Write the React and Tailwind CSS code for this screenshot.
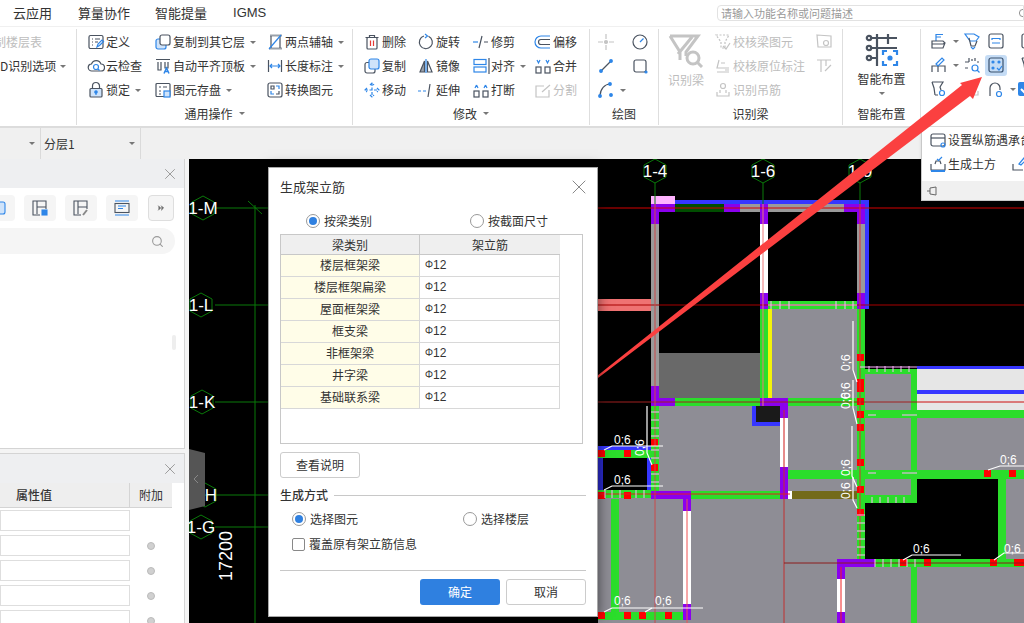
import React from 'react';
import { X, Search, ChevronsRight } from 'lucide-react';

const DK = '#4a5360';
const BL = '#2e86e8';
const GY = '#c4c4c4';

// all ribbon icons share one 18x18 box
const ICONS = {
  define: <><rect x="2" y="2.5" width="14" height="13" rx="1.5" /><path d="M5 6h1M8 6h5M5 9h1M8 9h3M5 12h1" /><path d="M10 14l1-3 4-4 1.5 1.5-4 4z" stroke={BL} /></>,
  cloud: <><path d="M5 14a3.5 3.5 0 0 1-.5-7A5 5 0 0 1 14 7a3.5 3.5 0 0 1 0 7z" /><circle cx="9" cy="10" r="2.5" stroke={BL} /><path d="M11 12l1.5 1.5" stroke={BL} /></>,
  lock: <><rect x="3" y="7.5" width="12" height="8.5" rx="1" fill="#cfe3fa" /><path d="M5.5 7.5V5a3.5 3.5 0 0 1 7 0v2.5" /><circle cx="9" cy="11" r="1.2" fill={BL} stroke={BL} /><path d="M9 12v2" stroke={BL} /></>,
  copyFloor: <><rect x="2" y="6" width="10" height="10" rx="2" fill="#cfe3fa" stroke={BL} /><rect x="6" y="2" width="10" height="10" rx="2" fill="#fff" /></>,
  align: <><path d="M2 2.5h14M4 5v8h3V5M11 5v6h3V5" /><path d="M10 16.500l2.500-5.500 2.500 5.500M11 14.500h3" stroke={BL} strokeWidth="1.500" /></>,
  save: <><rect x="2" y="2.5" width="14" height="13" rx="1" /><path d="M5 6h2M9 6h4M5 10h2M5 13h2" /><rect x="10" y="10" width="6" height="6" fill="#cfe3fa" stroke={BL} /></>,
  twoAxis: <><path d="M3 15.5h13M4 2.5h12" stroke="#9aa1aa" strokeWidth="2" /><path d="M5 3v12M14 3v12" stroke={DK} /><path d="M3 16L15 2" stroke={BL} /></>,
  dim: <><path d="M2.5 3v12M15.5 3v12" /><path d="M4 9h10M6 7l-2 2 2 2M12 7l2 2-2 2" stroke={BL} /></>,
  convert: <><rect x="2" y="2" width="14" height="14" rx="2" /><path d="M5 5h3v3H5zM10 13h3v-3" /><path d="M10 5h3v3M5 10v3h3" stroke={BL} /></>,
  del: <><path d="M2.5 4.5h13M6.5 4V2.5h5V4" /><rect x="4" y="4.5" width="10" height="11.5" rx="1" /><path d="M7.5 7.500v5.500M10.500 7.500v5.500" stroke="#e53935" /></>,
  copy: <><rect x="2" y="5.500" width="10" height="10.500" rx="2" fill="#fff" /><rect x="6" y="2" width="10" height="10" rx="2" fill="#cfe3fa" stroke={BL} /></>,
  move: <path d="M9 2v14M2 9h14M7 4l2-2 2 2M7 14l2 2 2-2M4 7L2 9l2 2M14 7l2 2-2 2" stroke={BL} strokeDasharray="3 1.500" />,
  rotate: <><path d="M11.500 3.300A6.500 6.500 0 1 1 7 3" /><path d="M8 1l2.500 2L8 5" stroke={BL} /></>,
  mirror: <><path d="M7.500 4L3 15h4.500z" fill="#9aa1aa" /><path d="M10.500 4L15 15h-4.500z" /><path d="M9 2v14" stroke={BL} /></>,
  extend: <><path d="M1 10h3M6 10h3" stroke={BL} /><path d="M13 3l-2 13" /></>,
  trim: <><path d="M1 9h5" stroke={BL} /><path d="M10 3L7 15M12 9h4" /></>,
  alignObj: <><rect x="2" y="2.500" width="12" height="5" stroke={BL} /><rect x="2" y="10" width="12" height="5" stroke={BL} /><path d="M17 1v16" /></>,
  breakObj: <><rect x="2" y="10" width="5" height="6" /><rect x="11" y="10" width="5" height="6" /><path d="M3 7l1.500-3M6 7L4.500 4M12 7l1.500-3M15 7l-1.500-3" stroke={BL} /></>,
  offset: <><path d="M16 3H7a6 6 0 0 0 0 12h9" stroke={BL} /><path d="M16 6.500H7a2.500 2.500 0 0 0 0 5h9" /></>,
  merge: <><rect x="2" y="10" width="5" height="6" /><rect x="11" y="10" width="5" height="6" /><path d="M3 3l1.500 3L6 3M12 3l1.500 3L15 3" stroke={BL} /></>,
  split: <><path d="M15 9v7H2V5h8" stroke={GY} /><path d="M8 11l8-7" stroke={GY} /></>,
  cross: <><path d="M9 1v5M9 12v5M1 9h5M12 9h5" stroke={GY} /><circle cx="9" cy="9" r="1.500" fill={GY} stroke={GY} /></>,
  gauge: <><circle cx="9" cy="9" r="7" /><path d="M9 9l3.500-3.500" stroke={BL} /></>,
  line: <><path d="M4 14L14 4" /><circle cx="4" cy="14" r="1.300" fill={BL} stroke={BL} /><circle cx="14" cy="4" r="1.300" fill={BL} stroke={BL} /></>,
  rect: <><rect x="3" y="3" width="12" height="12" rx="2" /><circle cx="15" cy="15" r="1" fill={BL} stroke={BL} /></>,
  arc: <><path d="M3 15C3 8 8 3 13 3" /><circle cx="3" cy="15" r="1.300" fill={BL} stroke={BL} /><circle cx="13" cy="3" r="1.300" fill={BL} stroke={BL} /><circle cx="14" cy="14" r="1.300" fill={BL} stroke={BL} /></>,
  chkBeam: <><path d="M2 2h13l-4 7v6H7V9z" stroke={GY} strokeDasharray="2 1.500" /><path d="M9 13l3 3 4-6" stroke={GY} /></>,
  chkMark: <><path d="M5 3l-2 8h12M3 15h12M7 6h4M11 13l4 0" stroke={GY} /></>,
  chkStir: <><circle cx="9" cy="5" r="2.500" stroke={GY} /><path d="M3 11v4h12v-4M6 9v3M12 9v3" stroke={GY} /></>,
  disA: <><path d="M2 2l14 1v11H3z" stroke={GY} /><circle cx="11" cy="10" r="2.500" stroke={GY} /></>,
  disB: <><path d="M2 3h14M6 3v12M11 3v6M10 14l6-6" stroke={GY} /></>,
  beam1: <><path d="M6 2v7M6 2.500h7M6 5h5" stroke={BL} /><path d="M2 9h11l2 2-2 5H2zM2 12h11l2-1" /></>,
  beam2: <><path d="M2 2h9l5 3-3 4H7z" stroke={BL} /><path d="M6 6l2 8h4l2-5" /><path d="M8 15l2 2 2-2" stroke={BL} /></>,
  bracket: <><rect x="2" y="2" width="14" height="14" rx="2" /><path d="M5 8V6.500h8V8M5 11h8" stroke={BL} /></>,
  pen: <><path d="M2 16v-6h13v6M8 10v6" /><path d="M6 8l6-6 2 2-6 6z" stroke={BL} /></>,
  scan: <><path d="M2 6h4M6 2v4M12 2v3M16 6h-2M2 12h3M9 3v2" /><circle cx="12" cy="12" r="3" stroke={BL} /><path d="M14 14l2.500 2.500" stroke={BL} /></>,
  dots: <><rect x="2" y="2" width="14" height="14" rx="2" stroke="#38506e" /><circle cx="6" cy="6" r="1" fill={BL} stroke={BL} /><circle cx="12" cy="6" r="1" fill={BL} stroke={BL} /><circle cx="6" cy="12" r="1" fill={BL} stroke={BL} /><path d="M10 12l2 2 3-4" stroke={BL} /></>,
  funnel: <><path d="M2 2h11l-3 5 1 3M5 15L4 8 2 2M5 15h3" /><circle cx="12" cy="13" r="2.500" stroke={BL} /></>,
  arch: <><path d="M3 16V8a5 5 0 0 1 10 0v2" /><circle cx="12" cy="14" r="2.500" stroke={BL} /></>,
  cap: <><rect x="2" y="3" width="14" height="12" rx="2" /><path d="M2 7h14" /><circle cx="14" cy="14" r="2" stroke={BL} /></>,
  soil: <><path d="M2 9v6h14V9M6 9l1-3h4l1 3" /><path d="M2 16h14" stroke={BL} strokeWidth="2" /><path d="M8 4l1.500 1.500L13 2" stroke={BL} /></>,
  soilEdit: <><path d="M2 9v6h10" /><path d="M8 9l5-6 2 2-5 5z" stroke={BL} /></>,
};

function Ico({ name, size = 18 }) {
  return (
    <svg width={size} height={size} viewBox="0 0 18 18" fill="none" stroke={DK} strokeWidth="1.200" className="shrink-0">
      {ICONS[name]}
    </svg>
  );
}

const Caret = ({ className = '' }) => (
  <span className={`inline-block w-0 h-0 border-x-[3px] border-x-transparent border-t-[3px] border-t-[#777] ${className}`} />
);

function Tool({ icon, text, caret, off }) {
  return (
    <div className={`h-6 flex items-center whitespace-nowrap ${off ? 'text-[#bdbdbd]' : 'text-[#333]'}`}>
      <Ico name={icon} />
      {text && <span className="ml-[1px]">{text}</span>}
      {caret && <Caret className="ml-[5px]" />}
    </div>
  );
}

const Col = ({ w, items }) => (
  <div className={`flex flex-col shrink-0 ${w}`}>
    {items.map((it, i) => <Tool key={i} {...it} />)}
  </div>
);

function Group({ w, pl = 'pl-[10px]', label, caret, children }) {
  return (
    <div className={`${w} h-[96px] shrink-0 flex flex-col border-r border-[#dedede]`}>
      <div className={`h-[73px] pt-[1px] flex overflow-hidden ${pl}`}>{children}</div>
      <div className="h-[23px] flex items-center justify-center gap-[6px] text-[#333] text-[12px]">
        {label}{caret && <Caret />}
      </div>
    </div>
  );
}

function Ribbon() {
  return (
    <div className="h-[101px] pt-[2px] flex border-b-2 border-[#dcdcdc] bg-white overflow-hidden">
      <Group w="w-[77px]" pl="pl-0" label="" >
        <div className="w-[76px]">
          <div className="h-6 flex items-center justify-end pr-[34px] text-[#bdbdbd] whitespace-nowrap overflow-hidden">制楼层表</div>
          <div className="h-6 flex items-center text-[#333] whitespace-nowrap">D识别选项<Caret className="ml-[4px]" /></div>
        </div>
      </Group>
      <Group w="w-[276px]" label="通用操作" caret>
        <Col w="w-[67px]" items={[{ icon: 'define', text: '定义' }, { icon: 'cloud', text: '云检查' }, { icon: 'lock', text: '锁定', caret: true }]} />
        <Col w="w-[112px]" items={[{ icon: 'copyFloor', text: '复制到其它层', caret: true }, { icon: 'align', text: '自动平齐顶板', caret: true }, { icon: 'save', text: '图元存盘', caret: true }]} />
        <Col w="w-[86px]" items={[{ icon: 'twoAxis', text: '两点辅轴', caret: true }, { icon: 'dim', text: '长度标注', caret: true }, { icon: 'convert', text: '转换图元' }]} />
      </Group>
      <Group w="w-[237px]" label="修改" caret>
        <Col w="w-[54px]" items={[{ icon: 'del', text: '删除' }, { icon: 'copy', text: '复制' }, { icon: 'move', text: '移动' }]} />
        <Col w="w-[55px]" items={[{ icon: 'rotate', text: '旋转' }, { icon: 'mirror', text: '镜像' }, { icon: 'extend', text: '延伸' }]} />
        <Col w="w-[62px]" items={[{ icon: 'trim', text: '修剪' }, { icon: 'alignObj', text: '对齐', caret: true }, { icon: 'breakObj', text: '打断' }]} />
        <Col w="w-[56px]" items={[{ icon: 'offset', text: '偏移' }, { icon: 'merge', text: '合并' }, { icon: 'split', text: '分割', off: true }]} />
      </Group>
      <Group w="w-[69px]" pl="pl-[7px]" label="绘图">
        <Col w="w-[34px]" items={[{ icon: 'cross' }, { icon: 'line' }, { icon: 'arc', caret: true }]} />
        <Col w="w-[24px]" items={[{ icon: 'gauge' }, { icon: 'rect' }]} />
      </Group>
      <Group w="w-[184px]" label="识别梁">
        <div className="w-[46px] -ml-[1px] flex flex-col items-start text-[#bdbdbd]">
          <svg width="36" height="34" viewBox="0 0 36 34" fill="none" stroke={GY} strokeWidth="3" className="mt-[4px]">
            <path d="M2 2h28L18 18v4M2 2l10 16v8M10 20L24 3" />
            <circle cx="25" cy="24" r="6" />
            <path d="M29 28l5 5" />
          </svg>
          <span className="mt-[3px]">识别梁</span>
        </div>
        <Col w="w-[101px]" items={[{ icon: 'chkBeam', text: '校核梁图元', off: true }, { icon: 'chkMark', text: '校核原位标注', off: true }, { icon: 'chkStir', text: '识别吊筋', off: true }]} />
        <Col w="w-[24px]" items={[{ icon: 'disA' }, { icon: 'disB' }]} />
      </Group>
      <Group w="w-[78px]" pl="pl-0" label="智能布置">
        <div className="w-[78px] flex flex-col items-center text-[#333]">
          <svg width="34" height="34" viewBox="0 0 34 34" fill="none" stroke={DK} strokeWidth="2.200" className="mt-[3px]">
            <path d="M6 5h26M6 15h26M6 25h6M12 1v32M23 1v10" />
            <circle cx="4" cy="5" r="2.200" /><circle cx="4" cy="15" r="2.200" /><circle cx="4" cy="25" r="2.200" />
            <path d="M18 22v-4h4M28 18h4v4M32 28v4h-4M22 32h-4v-4" stroke={BL} />
            <circle cx="25" cy="25" r="1.500" fill={BL} stroke={BL} />
          </svg>
          <span className="mt-[4px] leading-[16px]">智能布置</span>
          <Caret className="mt-[5px]" />
        </div>
      </Group>
      <div className="flex-1 pl-[9px] flex overflow-hidden">
        <Col w="w-[33px]" items={[{ icon: 'beam1', caret: true }, { icon: 'pen', caret: true }, { icon: 'funnel' }]} />
        <Col w="w-[24px]" items={[{ icon: 'beam2' }, { icon: 'scan' }, { icon: 'chkStir' }]} />
        <div className="w-[31px] shrink-0 flex flex-col">
          <Tool icon="bracket" />
          <div className="h-6 flex items-center"><div className="w-[22px] h-[21px] -ml-[2px] pl-[2px] rounded-[3px] bg-[#c5dcf5] flex items-center"><Ico name="dots" /></div></div>
          <Tool icon="arch" caret />
        </div>
        <div className="w-[14px] shrink-0 flex flex-col">
          <div className="h-6 pl-[2px] flex items-center"><Ico name="bracket" /></div>
          <div className="h-6 pl-[2px] flex items-center"><Ico name="funnel" /></div>
          <div className="h-6 flex items-center">
            <div className="w-[14px] h-[14px] rounded-[2px] bg-[#2e86e8] flex items-center justify-center">
              <svg width="10" height="10" viewBox="0 0 10 10" fill="none" stroke="#fff" strokeWidth="2"><path d="M1 5l3 3 5-6" /></svg>
            </div>
          </div>
        </div>
      </div>
    </div>
  );
}

function TopPanel() {
  return (
    <div className="relative h-[290px] bg-white border-b border-r border-[#d4d4d4]">
      <div className="h-[29px] bg-[#eeeff1] flex items-center justify-end pr-[5px]">
        <X size={18} strokeWidth={1.300} color="#9a9a9a" />
      </div>
      <div className="mt-[7px] h-[26px] flex gap-[9px] -ml-[17px]">
        {['copyFloor', 'save', 'chkEdit', 'list'].map((k, i) => (
          <div key={k} className="w-[32px] h-[26px] rounded-[4px] bg-[#f5f5f5] flex items-center justify-center">
            <svg width="16" height="16" viewBox="0 0 16 16" fill="none" stroke={i === 3 ? BL : DK} strokeWidth="1.100">
              {i === 0 && <rect x="2" y="2" width="12" height="12" rx="2" stroke={BL} fill="#cfe3fa" />}
              {i === 1 && <><path d="M8 15H1V1h13v8M5 1v13M5 7h9" /><rect x="10" y="10" width="5" height="5" fill={BL} stroke={BL} /></>}
              {i === 2 && <><path d="M8 15H1V1h13v8M5 1v13M5 7h9" /><path d="M10 15l4-5" stroke="#888" strokeWidth="2" /></>}
              {i === 3 && <><path d="M1 1h14M1 15h14" /><rect x="1" y="3.500" width="14" height="9" stroke={DK} /><path d="M4 6h8M4 8.500h5" /></>}
            </svg>
          </div>
        ))}
        <div className="ml-[1px] w-[26px] h-[26px] rounded-[4px] bg-[#f5f5f5] border border-[#dedede] flex items-center justify-center">
          <ChevronsRight size={10} color="#666" fill="#666" />
        </div>
      </div>
      <div className="mt-[7px] w-[175px] h-[26px] rounded-r-full bg-[#f5f5f5] flex items-center justify-end pr-[11px]">
        <Search size={13} color="#999" />
      </div>
      <div className="absolute left-[172px] top-[176px] w-[4px] h-[15px] rounded-sm bg-[#eeeeee]" />
    </div>
  );
}

function PropPanel() {
  return (
    <div className="flex-1 bg-white border-r border-t border-[#d4d4d4] overflow-hidden">
      <div className="h-[29px] bg-[#eeeff1] flex items-center justify-end pr-[5px]">
        <X size={18} strokeWidth={1.300} color="#9a9a9a" />
      </div>
      <div className="flex h-[25px] w-[172px] bg-[#eeeeee] border-b border-[#d4d4d4] text-[#333] text-[12px]">
        <div className="w-[130px] border-r border-[#d4d4d4] flex items-center pl-[16px] font-medium">属性值</div>
        <div className="flex-1 flex items-center justify-center">附加</div>
      </div>
      <div className="mt-[2px] flex flex-col gap-[4px]">
        {[0, 1, 2, 3, 4].map((i) => (
          <div key={i} className="flex items-center h-[21px]">
            <div className="w-[130px] h-[21px] bg-white border border-[#dedede]" />
            {i > 0 && <div className="ml-[17px] w-[8px] h-[8px] rounded-full bg-[#d0d0d0] border border-[#bbbbbb]" />}
          </div>
        ))}
      </div>
    </div>
  );
}

const C = { g: '#2bdd2b', p: '#8a00ee', b: '#3636ff', r: '#ff0000', y: '#8e8d95', w: '#ffffff', s: '#9a9a9a' };

// x1,y1,x2,y2,colour in page pixels
const BLOCKS = [
  [659, 406, 1024, 623, C.y], [598, 498, 660, 623, C.y], [772, 309, 857, 402, C.y], [865, 374, 911, 410, C.y],
  [865, 503, 998, 559, '#000'], [917, 479, 998, 503, '#000'],
  [917, 366, 1024, 410, '#e6e6e6'], [917, 366, 1024, 369, C.b], [917, 390, 1024, 394, C.b],
  [659, 353, 760, 398, '#696969'],
  [598, 299, 651, 311, '#ef7272'],
  // top beam
  [675, 200, 869, 204, C.b], [865, 200, 869, 309, C.b], [651, 196, 675, 204, '#ffb3ff'],
  [675, 204, 724, 212, '#004d00'], [724, 204, 740, 212, C.p], [740, 204, 760, 212, C.s], [768, 204, 844, 212, C.s],
  [651, 204, 675, 212, C.p], [651, 204, 659, 224, C.p], [760, 204, 768, 224, C.p], [844, 204, 865, 212, C.p], [857, 204, 865, 224, C.p],
  [651, 224, 659, 386, C.s], [857, 224, 865, 293, C.s], [760, 224, 768, 293, C.w],
  [760, 293, 768, 309, C.p], [857, 293, 865, 309, C.p], [768, 301, 857, 309, C.g],
  [760, 309, 768, 398, C.g], [768, 309, 772, 398, '#f4f40a'], [857, 309, 865, 559, C.g],
  [651, 386, 659, 406, C.p], [651, 398, 675, 406, C.p], [675, 398, 760, 406, C.g], [760, 398, 788, 406, C.p], [788, 398, 857, 406, C.g],
  [780, 406, 788, 418, C.p], [780, 418, 788, 467, C.w], [780, 467, 788, 499, C.p],
  [752, 406, 780, 426, C.b], [756, 406, 780, 422, '#1a1a1a'],
  // room on the left
  [598, 446, 651, 450, C.b], [598, 450, 651, 458, C.g], [598, 458, 603, 490, '#2a2acc'], [647, 458, 651, 490, C.b],
  [598, 490, 651, 498, C.g], [651, 406, 659, 491, C.g],
  [651, 491, 691, 499, C.p], [683, 499, 691, 511, C.p], [683, 511, 691, 604, C.w], [683, 604, 691, 620, C.p],
  [691, 491, 780, 499, C.g], [611, 499, 619, 613, C.g], [598, 612, 683, 620, C.g],
  // right side
  [788, 470, 1024, 479, C.g], [792, 491, 857, 499, '#736a1a'], [788, 491, 792, 499, C.w],
  [865, 369, 917, 374, C.g], [911, 369, 917, 470, C.g], [865, 410, 1024, 418, C.g],
  [911, 479, 917, 503, C.g], [865, 495, 917, 503, C.g], [998, 479, 1006, 559, C.g],
  [857, 559, 1024, 567, C.g], [837, 559, 875, 567, C.p], [837, 567, 845, 579, C.p], [837, 579, 845, 612, C.w], [837, 612, 845, 623, C.p],
  [911, 567, 917, 623, C.g],
  // red squares
  ...[[857, 354], [857, 379], [857, 385], [857, 398], [857, 411], [857, 424], [857, 459], [857, 486], [857, 509],
    [651, 439], [651, 464], [598, 450], [624, 450], [598, 492], [624, 492], [598, 612], [624, 612], [639, 612], [665, 612],
    [984, 470], [1009, 470], [900, 559], [924, 559], [990, 559], [1014, 559], [1020, 559]].map(([x, y]) => [x, y, x + 7, y + 7, C.r]),
];

const LINES = [
  [255, 205, 255, 623, '#0a7a0a'], [248, 201, 262, 214, '#0a7a0a'],
  [215, 208, 268, 208, '#0a7a0a'], [215, 305, 268, 305, '#0a7a0a'], [215, 402, 268, 402, '#0a7a0a'], [205, 495, 268, 495, '#0a7a0a'], [215, 527, 268, 527, '#0a7a0a'],
  [655, 183, 655, 204, '#0a7a0a'], [763, 183, 763, 204, '#0a7a0a'], [860, 183, 860, 204, '#0a7a0a'],
  [598, 208, 1024, 208, '#d40000'], [598, 305, 1024, 305, '#a80000'], [598, 402, 1024, 402, '#a02020'], [917, 402, 1024, 402, '#f07070'],
  [655, 204, 655, 623, '#c84a4a'], [763, 204, 763, 406, '#ee7a7a'], [860, 204, 860, 559, '#d83030'], [784, 410, 784, 623, '#c03030'],
  [598, 494, 790, 494, '#e02020'], [784, 563, 1024, 563, '#8c1c1c'],
  [687, 499, 687, 623, '#f05050'], [841, 567, 841, 623, '#f02020'], [784, 418, 784, 467, '#f08080'],
];

const PINK = [
  ...[771, 780, 789, 836, 845, 853].map((x) => [x, 301, x, 309]),
  [768, 305, 857, 305],
  [860, 367, 917, 367], ...[869, 877, 885, 893, 901, 909].map((x) => [x, 366, x, 372]),
  ...[412, 420, 428, 436, 450, 458, 474, 482].map((y) => [651, y, 659, y]),
  ...[515, 523, 531, 539, 547, 555].map((y) => [857, y, 865, y]),
  ...[872, 880, 888, 896, 904].map((x) => [x, 497, x, 503]),
  [868, 415, 876, 415], [902, 415, 917, 415], [868, 473, 876, 473], [902, 473, 917, 473],
  ...[875, 883, 891, 899, 907, 915].map((x) => [x, 559, x, 567]),
  ...[605, 612, 620, 636, 644].map((x) => [x, 490, x, 498]),
];

const LEADERS = [
  '604,450 612,446 663,446', '604,490 612,486 663,486', '604,612 612,608 703,608', '645,612 652,608',
  '903,560 912,555 961,555', '994,560 1004,553 1024,553', '988,470 1000,466 1024,466',
  '853,321 853,370 857,382', '853,380 853,408 857,424', '852,426 852,476 857,487', '853,477 853,500 857,508',
  '647,406 647,453 652,465',
];

const hex = (x, y) => `${x},${y - 12} ${x + 11},${y - 6} ${x + 11},${y + 6} ${x},${y + 12} ${x - 11},${y + 6} ${x - 11},${y - 6}`;

function Cad() {
  return (
    <div className="flex-1 bg-black overflow-hidden">
      <svg width="835" height="464" viewBox="189 159 835 464" fontFamily="Liberation Sans, sans-serif">
        {BLOCKS.map(([a, b, c, d, f], i) => <rect key={i} x={a} y={b} width={c - a} height={d - b} fill={f} />)}
        {LINES.map(([a, b, c, d, f], i) => <line key={i} x1={a} y1={b} x2={c} y2={d} stroke={f} strokeWidth="1" />)}
        {PINK.map(([a, b, c, d], i) => <line key={i} x1={a} y1={b} x2={c} y2={d} stroke="#ffb3ff" strokeWidth="1" />)}
        {LEADERS.map((p, i) => <polyline key={i} points={p} fill="none" stroke="#fff" strokeWidth="1.200" />)}

        {[[655, 171, '1-4'], [763, 171, '1-6'], [860, 171, '1-9'], [203, 208, '1-M'], [201, 305, '1-L'], [202, 402, '1-K'], [205, 495, 'H'], [201, 527, '1-G']].map(([x, y, t]) => (
          <g key={t}>
            <polygon points={hex(x, y)} fill="none" stroke="#0a7a0a" />
            <text x={t === 'H' ? 211 : x} y={y + 6} fill="#fff" fontSize="17" textAnchor="middle">{t}</text>
          </g>
        ))}
        <text transform="translate(232 581) rotate(-90)" fill="#fff" fontSize="18">17200</text>

        {[[614, 444], [614, 484], [614, 605], [655, 605], [913, 553], [1004, 553], [1000, 464]].map(([x, y], i) => (
          <text key={i} x={x} y={y} fill="#fff" fontSize="12">0;6</text>
        ))}
        {[[850, 371], [850, 399], [850, 409], [850, 476], [850, 499], [644, 456]].map(([x, y], i) => (
          <text key={i} transform={`translate(${x} ${y}) rotate(-90)`} fill="#fff" fontSize="12">0;6</text>
        ))}

        <path d="M189 449l16 4v53l-16 4z" fill="#555555" />
        <path d="M198 475l-4 4 4 4" fill="none" stroke="#888" strokeWidth="1" />
      </svg>
    </div>
  );
}

function Radio({ on, label }) {
  return (
    <span className="flex items-center gap-[4px] text-[#333]">
      <span className="w-[14px] h-[14px] rounded-full border border-[#999] bg-white flex items-center justify-center">
        {on && <span className="w-[8px] h-[8px] rounded-full bg-[#2f80e0]" />}
      </span>
      {label}
    </span>
  );
}

const BEAMS = ['楼层框架梁', '楼层框架扁梁', '屋面框架梁', '框支梁', '非框架梁', '井字梁', '基础联系梁'];

function Dialog() {
  return (
    <div className="absolute left-[268px] top-[167px] w-[330px] h-[450px] bg-white border border-[#a8a8a8] shadow-[0_0_12px_rgba(0,0,0,0.55)] px-[11px] text-[12px] text-[#333]">
      <div className="h-[39px] flex items-center justify-between pb-[2px]">
        <span className="text-[13px]">生成架立筋</span>
        <X size={24} strokeWidth={1} color="#888" className="-mr-[5px]" />
      </div>
      <div className="h-[27px] flex items-center pl-[26px] text-[#222]">
        <div className="w-[164px]"><Radio on label="按梁类别" /></div>
        <Radio label="按截面尺寸" />
      </div>
      <div className="h-[210px] mr-[3px] border border-[#c8c8c8]">
        <div className="w-[279px]">
          <div className="flex h-[20px] bg-[#efefef] border-b border-[#c8c8c8]">
            <div className="w-[139px] border-r border-[#c8c8c8] flex items-center justify-center">梁类别</div>
            <div className="flex-1 flex items-center justify-center">架立筋</div>
          </div>
          {BEAMS.map((b) => (
            <div key={b} className="flex h-[22px] border-b border-r border-[#d8d8d8]">
              <div className="w-[139px] pb-[1px] bg-[#fffde8] border-r border-[#d8d8d8] flex items-center justify-center">{b}</div>
              <div className="flex-1 pl-[5px] pb-[1px] flex items-center">
                <span className="text-[10px] leading-none -mt-[3px]">Φ</span><span className="font-['Liberation_Sans',sans-serif]">12</span>
              </div>
            </div>
          ))}
        </div>
      </div>
      <div className="mt-[8px] w-[80px] h-[26px] border border-[#cccccc] rounded-[3px] flex items-center justify-center">查看说明</div>
      <div className="mt-[8px] h-[18px] flex items-center gap-[6px]">
        <span className="font-medium">生成方式</span>
        <span className="flex-1 h-px bg-[#c8c8c8]" />
      </div>
      <div className="mt-[2px] h-[26px] flex items-center pl-[12px]">
        <div className="w-[171px]"><Radio on label="选择图元" /></div>
        <Radio label="选择楼层" />
      </div>
      <div className="h-[24px] pl-[12px] flex items-center gap-[4px]">
        <span className="w-[13px] h-[13px] border border-[#888] rounded-[2px]" />覆盖原有架立筋信息
      </div>
      <div className="mt-[14px] h-px bg-[#c8c8c8]" />
      <div className="mt-[8px] flex justify-end gap-[6px]">
        <div className="w-[80px] h-[26px] rounded-[3px] bg-[#2f80e0] text-white flex items-center justify-center">确定</div>
        <div className="w-[80px] h-[26px] rounded-[3px] border border-[#cccccc] flex items-center justify-center">取消</div>
      </div>
    </div>
  );
}

function Popup() {
  return (
    <div className="absolute left-[921px] top-[127px] w-[103px] h-[74px] bg-white border-l border-b border-[#c8c8c8] overflow-hidden text-[12px] text-[#333] shadow-sm">
      <div className="h-[54px] pl-[7px] pt-[1px] bg-white whitespace-nowrap">
        <div className="h-6 flex items-center gap-[1px]"><Ico name="cap" />设置纵筋遇承台</div>
        <div className="h-6 flex items-center gap-[1px]"><Ico name="soil" />生成土方<span className="ml-[14px]"><Ico name="soilEdit" /></span></div>
      </div>
      <div className="h-[19px] bg-[#f0f0f0] pl-[5px] flex items-center">
        <svg width="10" height="10" viewBox="0 0 10 10" fill="none" stroke="#666"><path d="M0 5h3M3 2v6l6 1V1z" /></svg>
      </div>
    </div>
  );
}

export default function App() {
  return (
    <div className="relative w-[1024px] h-[623px] overflow-hidden bg-white flex flex-col text-[12px] font-['Noto_Sans_CJK_SC','Liberation_Sans',sans-serif]">
      <div className="h-[27px] shrink-0 flex items-center border-b border-[#f0f0f0] text-[13px] text-[#333]">
        <span className="ml-[13px]">云应用</span>
        <span className="ml-[26px]">算量协作</span>
        <span className="ml-[25px]">智能提量</span>
        <span className="ml-[26px] font-['Liberation_Sans',sans-serif]">IGMS</span>
        <div className="ml-auto w-[307px] h-[16px] border border-[#e2e2e2] rounded-l-sm pl-[3px] flex items-center justify-between text-[11px] text-[#999] overflow-hidden">
          请输入功能名称或问题描述
          <Search size={11} color="#888" className="shrink-0 -mr-[6px]" />
        </div>
      </div>
      <Ribbon />
      <div className="h-[31px] shrink-0 bg-[#f0f0f0] flex text-[#333]">
        <div className="w-[41px] border-r border-[#dadada] flex items-center justify-end pr-[5px]"><Caret /></div>
        <div className="w-[100px] border-r border-[#dadada] flex items-center justify-between pl-[3px] pr-[5px]">分层1<Caret /></div>
      </div>
      <div className="flex-1 flex min-h-0">
        <div className="w-[185px] shrink-0 flex flex-col gap-[4px] bg-[#f4f4f4]">
          <TopPanel />
          <PropPanel />
        </div>
        <div className="w-[4px] bg-[#f4f4f4]" />
        <Cad />
      </div>
      <Popup />
      <svg className="absolute inset-0 pointer-events-none" width="1024" height="623" viewBox="0 0 1024 623">
        <polygon points="597,376 962,85 960,83 982,77 973,99 970,96 598,378" fill="#fb4040" />
      </svg>
      <Dialog />
    </div>
  );
}
